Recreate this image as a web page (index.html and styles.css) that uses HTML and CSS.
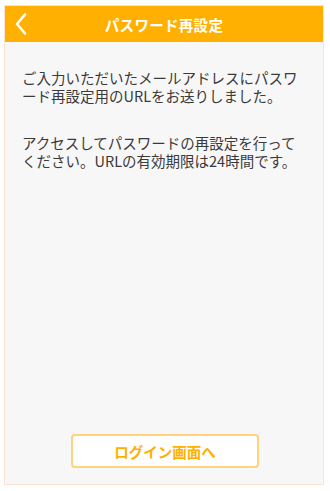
FILE: index.html
```html
<!DOCTYPE html>
<html lang="ja">
<head>
    <meta charset="UTF-8">
    <meta name="viewport" content="width=device-width, initial-scale=1.0">
    <title>パスワード再設定</title>
    <link rel="stylesheet" href="styles.css">
</head>
<body>

    <div class="screen">
        <header class="header">
            <a class="back" href="#">
                <svg width="14" height="22" viewBox="0 0 14 22">
                    <path d="M11 1.5 L3 11 L11 20.5" fill="none" stroke="#fff" stroke-width="2.6" stroke-linecap="round" stroke-linejoin="round"/>
                </svg>
            </a>
            <h1>パスワード再設定</h1>
        </header>

        <div class="content">
            <p>ご入力いただいたメールアドレスにパスワード再設定用のURLをお送りしました。</p>
            <p>アクセスしてパスワードの再設定を行ってください。URLの有効期限は24時間です。</p>
        </div>

        <div class="footer">
            <a class="btn" href="#">ログイン画面へ</a>
        </div>
    </div>

</body>
</html>
```

FILE: styles.css
```css
body {
    margin: 0;
    padding: 0;
    background: #fff;
    font-family: "Noto Sans CJK JP", "Noto Sans", sans-serif;
    color: #3a3a3a;
}

.screen {
    box-sizing: border-box;
    width: 320px;
    height: 480px;
    margin: 5px 0 0 4px;
    border: 1px solid #fde2d2;
    background: #f7f7f7;
    display: flex;
    flex-direction: column;
}

.header {
    position: relative;
    height: 36px;
    background: #ffb000;
    display: flex;
    align-items: center;
    justify-content: center;
}

.header h1 {
    margin: 0;
    font-size: 14.5px;
    font-weight: bold;
    color: #fff;
    letter-spacing: 0.3px;
}

.back {
    position: absolute;
    left: 9px;
    top: 7px;
    display: block;
    line-height: 0;
}

.content {
    flex: 1;
    padding: 27px 17px 0 17px;
}

.content p {
    margin: 0 0 29px 0;
    font-size: 14.5px;
    line-height: 18px;
}

.footer {
    display: flex;
    justify-content: center;
    padding: 0 0 16px 2px;
}

.btn {
    box-sizing: border-box;
    width: 188px;
    height: 34px;
    border: 2px solid #ffd27e;
    border-radius: 4px;
    background: #fff;
    color: #ffb000;
    font-size: 14.5px;
    font-weight: bold;
    text-decoration: none;
    display: flex;
    align-items: center;
    justify-content: center;
}
```
